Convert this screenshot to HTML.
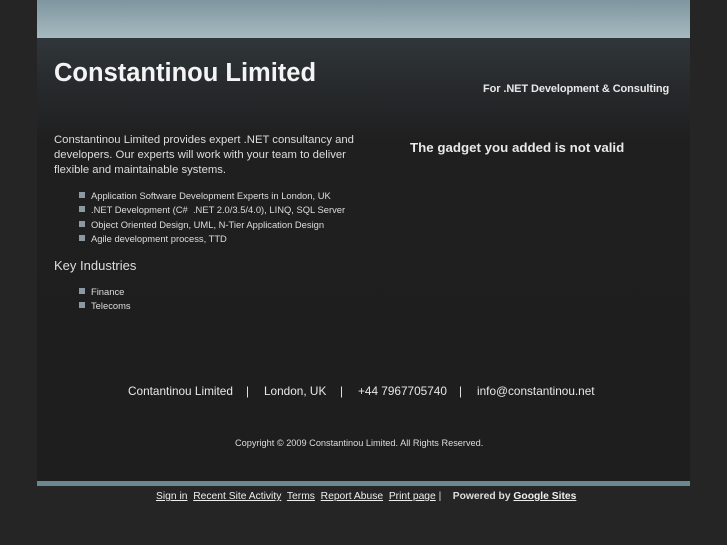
<!DOCTYPE html>
<html><head><meta charset="utf-8"><style>
*{margin:0;padding:0}
html,body{width:727px;height:545px;overflow:hidden;background:#252525;font-family:"Liberation Sans",sans-serif;color:#e8e8e8}
.wrap{position:absolute;left:37px;top:0;width:653px;height:481px;background:linear-gradient(#30363a 38px,#26292b 90px,#1f1f1f 140px,#1e1e1e)}
.hdr{position:absolute;left:37px;top:0;width:653px;height:38px;background:linear-gradient(#7e96a0,#a6b9c0)}
.bar{position:absolute;left:37px;top:481px;width:653px;height:5px;background:#6b8792}
.t{position:absolute;white-space:nowrap}
.c{position:absolute;top:384px;font-size:11.8px;white-space:nowrap}
ul{list-style:none}
li{position:absolute;left:91px;font-size:9.4px;white-space:nowrap;color:#ddd}
li:before{content:"";position:absolute;left:-12px;top:2px;width:6px;height:6px;background:#8a9aa0}
a{color:#eee;text-decoration:underline}
</style></head><body>
<div class="wrap"></div><div class="hdr"></div><div class="bar"></div>
<div class="t" style="left:54px;top:59px;font-size:25.5px;font-weight:bold;color:#f4f4f4">Constantinou Limited</div>
<div class="t" style="left:483px;top:83px;font-size:11px;font-weight:bold;letter-spacing:-0.1px">For .NET Development &amp; Consulting</div>
<div class="t" style="left:54px;top:133px;font-size:11.3px;line-height:15px;color:#ddd">Constantinou Limited provides expert .NET consultancy and<br>developers. Our experts will work with your team to deliver<br>flexible and maintainable systems.</div>
<ul>
<li style="top:190px">Application Software Development Experts in London, UK</li>
<li style="top:204px">.NET Development (C#&nbsp; .NET 2.0/3.5/4.0), LINQ, SQL Server</li>
<li style="top:219px">Object Oriented Design, UML, N-Tier Application Design</li>
<li style="top:233px">Agile development process, TTD</li>
<li style="top:286px">Finance</li>
<li style="top:300px">Telecoms</li>
</ul>
<div class="t" style="left:54px;top:258px;font-size:13px;color:#ddd">Key Industries</div>
<div class="t" style="left:410px;top:140px;font-size:13.3px;font-weight:bold">The gadget you added is not valid</div>
<div class="c" style="left:128px">Contantinou Limited</div>
<div class="c" style="left:246px">|</div>
<div class="c" style="left:264px">London, UK</div>
<div class="c" style="left:340px">|</div>
<div class="c" style="left:358px">+44 7967705740</div>
<div class="c" style="left:459px">|</div>
<div class="c" style="left:477px">info@constantinou.net</div>
<div class="t" style="left:235px;top:438px;font-size:9.2px;color:#ddd">Copyright © 2009 Constantinou Limited. All Rights Reserved.</div>
<div class="t" style="left:156px;top:491px;font-size:10.3px;color:#ddd"><a>Sign in</a>&nbsp; <a>Recent Site Activity</a>&nbsp; <a>Terms</a>&nbsp; <a>Report Abuse</a>&nbsp; <a>Print page</a> | &nbsp;&nbsp; <b>Powered by <a>Google Sites</a></b></div>
</body></html>
